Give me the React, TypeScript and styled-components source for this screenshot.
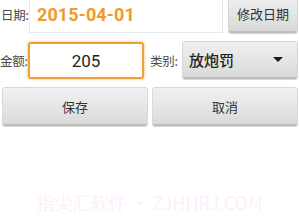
import React from "react";
import styled, { createGlobalStyle } from "styled-components";

const Global = createGlobalStyle`
  html, body { margin: 0; padding: 0; background: #ffffff; overflow: hidden; }
  body { font-family: Roboto, "Noto Sans CJK SC", sans-serif; }
`;

const Page = styled.div`
  width: 299px;
  height: 223px;
  display: flex;
  flex-direction: column;
  padding: 0 2px 0 0;
  box-sizing: border-box;
`;

const Row = styled.div<{ $top: number; $h: number }>`
  display: flex;
  align-items: center;
  height: ${(p) => p.$h}px;
  margin-top: ${(p) => p.$top}px;
`;

const Label = styled.div<{ $w: number; $pl: number }>`
  width: ${(p) => p.$w}px;
  flex: none;
  font-size: 12.5px;
  color: #4a4a4a;
  font-family: "Noto Sans CJK SC", sans-serif;
  padding-left: ${(p) => p.$pl}px;
  box-sizing: border-box;
  white-space: nowrap;
  letter-spacing: -0.2px;
`;

const DateField = styled.div`
  width: 194px;
  height: 100%;
  margin-left: 1px;
  box-sizing: border-box;
  border: 1px solid #e3ebf2;
  border-top: none;
  background: #ffffff;
  display: flex;
  align-items: center;
  padding: 0 0 0 7px;
  font-family: Roboto, sans-serif;
  font-weight: 700;
  font-size: 18px;
  color: #f09a2a;
  letter-spacing: 0.1px;
`;

const GrayButton = styled.div<{ $w: number; $ml: number }>`
  width: ${(p) => p.$w}px;
  margin-left: ${(p) => p.$ml}px;
  height: 100%;
  flex: none;
  box-sizing: border-box;
  border-radius: 2px;
  background: linear-gradient(#f1f1f1, #e2e2e2 60%, #d9d9d9);
  border-bottom: 2px solid #bdbdbd;
  box-shadow: 0 0 0 1px #d6d6d6;
  display: flex;
  align-items: center;
  justify-content: center;
  font-family: "Noto Sans CJK SC", sans-serif;
  font-size: 13px;
  color: #333333;
`;

const AmountInput = styled.div`
  width: 116px;
  height: 100%;
  flex: none;
  box-sizing: border-box;
  border: 2px solid #f0a038;
  border-radius: 3px;
  box-shadow: 0 0 2px 1px rgba(246, 186, 110, 0.6);
  background: #ffffff;
  display: flex;
  align-items: center;
  justify-content: center;
  font-family: Roboto, sans-serif;
  font-size: 17px;
  color: #1e1e1e;
`;

const Spinner = styled.div`
  width: 114px;
  margin-left: 5px;
  height: 100%;
  flex: none;
  box-sizing: border-box;
  border-radius: 2px;
  background: linear-gradient(#f0f0f0, #e3e3e3 60%, #d9d9d9);
  border-bottom: 2px solid #bdbdbd;
  box-shadow: 0 0 0 1px #d6d6d6;
  display: flex;
  align-items: center;
  justify-content: space-between;
  padding: 0 14px 0 6px;
  font-family: "Noto Sans CJK SC", sans-serif;
  font-size: 15px;
  font-weight: 500;
  color: #222222;
`;

const Caret = styled.span`
  width: 0;
  height: 0;
  border-left: 5px solid transparent;
  border-right: 5px solid transparent;
  border-top: 5px solid #1a1a1a;
`;

const ButtonRow = styled.div`
  display: grid;
  grid-template-columns: 144px 144px;
  column-gap: 6px;
  height: 38px;
  margin-top: 9px;
  padding-left: 3px;
`;

const ActionButton = styled.div`
  box-sizing: border-box;
  border-radius: 2px;
  background: linear-gradient(#f0f0f0, #e4e4e4 60%, #dadada);
  border-bottom: 2px solid #bdbdbd;
  box-shadow: 0 0 0 1px #d8d8d8;
  display: flex;
  align-items: center;
  justify-content: center;
  font-family: "Noto Sans CJK SC", sans-serif;
  font-size: 13px;
  color: #333333;
`;

const Watermark = styled.div`
  margin-top: 63px;
  text-align: center;
  font-family: "Noto Sans CJK SC", sans-serif;
  font-size: 18px;
  color: #fdeffc;
  white-space: nowrap;
  padding-left: 2px;
`;

export default function App() {
  return (
    <>
      <Global />
      <Page>
        <Row $top={-4} $h={37}>
          <Label $w={28} $pl={1}>日期:</Label>
          <DateField>2015-04-01</DateField>
          <GrayButton $w={68} $ml={6}>修改日期</GrayButton>
        </Row>
        <Row $top={9} $h={37}>
          <Label $w={28} $pl={0}>金额:</Label>
          <AmountInput>205</AmountInput>
          <Label $w={34} $pl={6}>类别:</Label>
          <Spinner>
            <span>放炮罚</span>
            <Caret />
          </Spinner>
        </Row>
        <ButtonRow>
          <ActionButton>保存</ActionButton>
          <ActionButton>取消</ActionButton>
        </ButtonRow>
        <Watermark>指尖汇软件 • ZJHHRJ.COM</Watermark>
      </Page>
    </>
  );
}
